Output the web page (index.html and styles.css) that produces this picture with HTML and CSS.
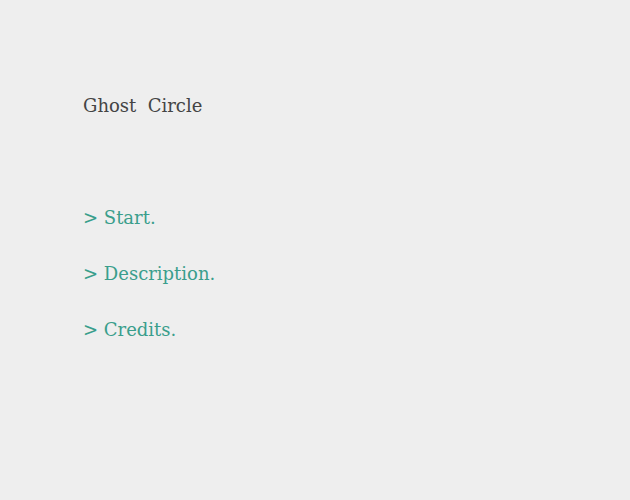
FILE: index.html
```html
<!DOCTYPE html>
<html>
<head>
<meta charset="utf-8">
<link rel="stylesheet" href="styles.css">
</head>
<body>
<div class="page">
  <h1 class="title">Ghost&nbsp; Circle</h1>
  <ul class="menu">
    <li><a class="item" href="#">&gt; Start.</a></li>
    <li><a class="item" href="#">&gt; Description.</a></li>
    <li><a class="item" href="#">&gt; Credits.</a></li>
  </ul>
</div>
</body>
</html>
```

FILE: styles.css
```css
html, body {
  margin: 0;
  padding: 0;
  background: #eeeeee;
}
.page {
  padding: 92px 0 0 83px;
  font-family: "DejaVu Serif", serif;
  font-size: 18px;
}
.title {
  margin: 0;
  font-size: 18px;
  font-weight: normal;
  color: #444444;
  line-height: 28px;
}
.menu {
  list-style: none;
  margin: 84px 0 0 0;
  padding: 0;
  display: flex;
  flex-direction: column;
  gap: 28px;
}
.menu li {
  line-height: 28px;
}
.item {
  color: #3a9e8c;
  text-decoration: none;
}
```
